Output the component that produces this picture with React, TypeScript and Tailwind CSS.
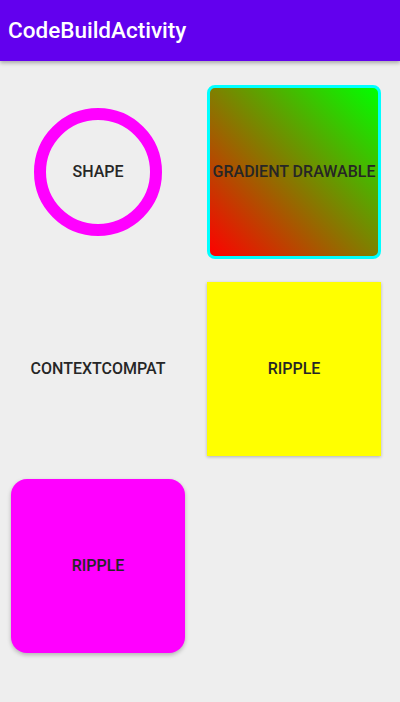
export default function App() {
  const label = "text-[16px] font-medium uppercase text-[#262626] whitespace-nowrap"
  return (
    <div className="w-[400px] h-[702px] bg-[#eeeeee] overflow-hidden" style={{ fontFamily: 'Roboto, "Liberation Sans", sans-serif' }}>
      {/* App bar */}
      <div className="relative z-10 h-[61px] bg-[#6200ee] flex items-center px-[8px] shadow-[0_2px_4px_rgba(0,0,0,0.3)]">
        <h1 className="text-[22.5px] font-medium text-white">CodeBuildActivity</h1>
      </div>

      {/* Grid */}
      <div className="grid grid-cols-[174px_174px] gap-x-[22px] gap-y-[23px] pl-[11px] pt-[24px]">
        {/* Shape */}
        <div className="h-[174px] flex items-center justify-center">
          <div className="w-[128px] h-[128px] rounded-full border-[12px] border-[#ff00ff] flex items-center justify-center">
            <span className={label}>Shape</span>
          </div>
        </div>

        {/* Gradient drawable */}
        <div className="h-[174px] rounded-[8px] border-[3px] border-[#00ffff] bg-[linear-gradient(45deg,#ff0000,#00ff00)] flex items-center justify-center overflow-visible">
          <span className={label + " text-[#111]"}>Gradient Drawable</span>
        </div>

        {/* ContextCompat */}
        <div className="h-[174px] flex items-center justify-center">
          <span className={label}>ContextCompat</span>
        </div>

        {/* Ripple yellow */}
        <div className="h-[174px] bg-[#ffff00] flex items-center justify-center shadow-[0_1px_3px_rgba(0,0,0,0.25)]">
          <span className={label}>Ripple</span>
        </div>

        {/* Ripple magenta */}
        <div className="h-[174px] rounded-[16px] bg-[#ff00ff] flex items-center justify-center shadow-[0_2px_4px_rgba(0,0,0,0.25)]">
          <span className={label + " text-[#2a0030]"}>Ripple</span>
        </div>
      </div>
    </div>
  )
}
